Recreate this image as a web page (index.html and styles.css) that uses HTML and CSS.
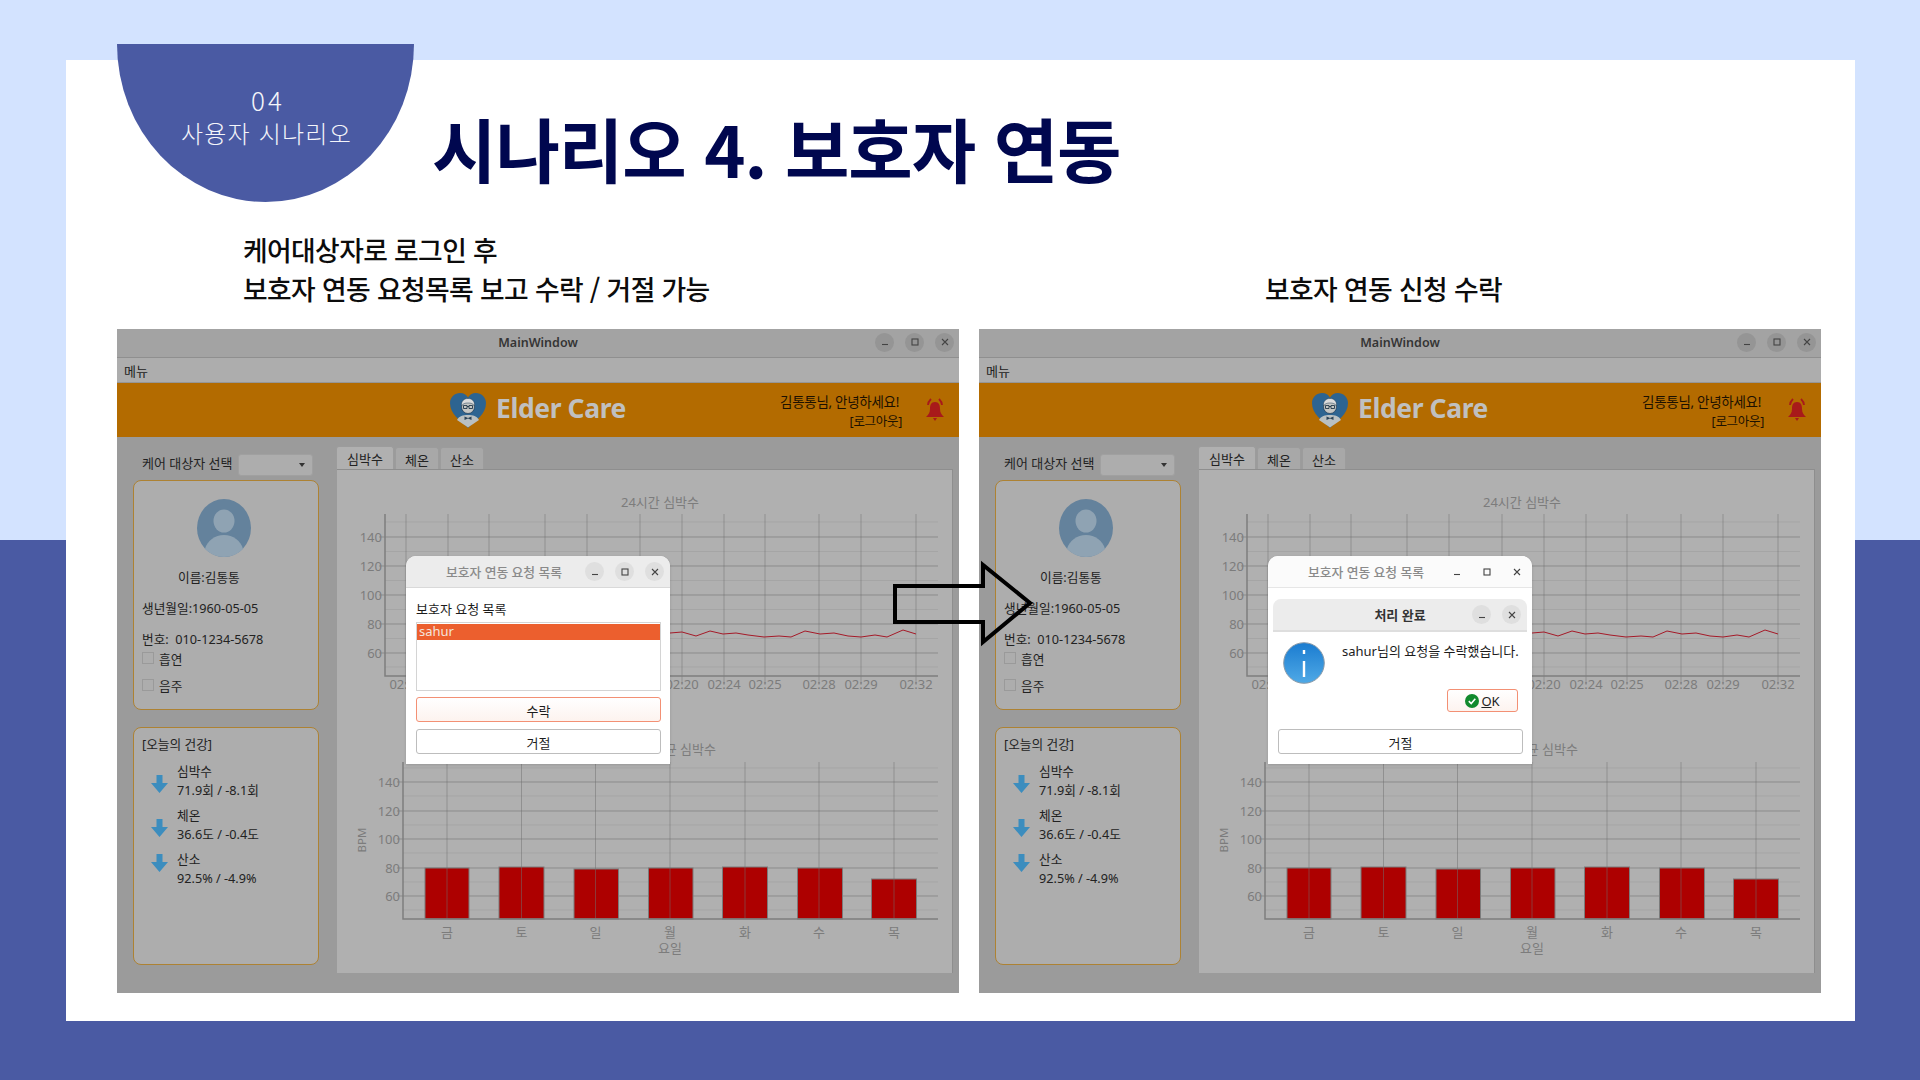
FILE: index.html
```html
<!DOCTYPE html>
<html lang="ko">
<head>
<meta charset="utf-8">
<title>시나리오 4. 보호자 연동</title>
<link rel="stylesheet" href="styles.css">
</head>
<body>
<div class="slide">
  <div class="sheet">
    <header class="head">
      <div class="badge"><span class="badge-num">04</span><span class="badge-text">사용자 시나리오</span></div>
      <h1 class="title">시나리오 4. 보호자 연동</h1>
    </header>
    <div class="stage">
      <div class="captions">
        <p class="cap cap-left">케어대상자로 로그인 후<br>보호자 연동 요청목록 보고 수락 / 거절 가능</p>
        <p class="cap cap-right">보호자 연동 신청 수락</p>
      </div>
      <div class="windows">
        <section class="window">
          <div class="titlebar"><span></span><span class="wt">MainWindow</span>
            <div class="ctrls"><i class="c"><svg class="gl" viewBox="0 0 10 10"><path d="M2 7.5H8"/></svg></i><i class="c"><svg class="gl" viewBox="0 0 10 10"><rect x="2" y="2" width="6" height="6"/></svg></i><i class="c"><svg class="gl" viewBox="0 0 10 10"><path d="M2 2L8 8M8 2L2 8"/></svg></i></div>
          </div>
          <div class="menubar">메뉴</div>
          <div class="brand">
            <span></span>
            <div class="logo">
              <svg class="heart" viewBox="0 0 36 36"><path class="h-bg" d="M18 35C10 27 0 21 0 10C0 4 5 0 10 0C14 0 16.5 2 18 4.5C19.5 2 22 0 26 0C31 0 36 4 36 10C36 21 26 27 18 35Z"/><path class="h-body" d="M7 27C9 23 13 22 18 22C23 22 27 23 29 27C25 30 21 32 18 34.500C15 32 11 30 7 27Z"/><circle class="h-head" cx="18" cy="14" r="6.500"/><path class="h-hair" d="M11.500 13C11 8 14 5.500 18 5.500C22 5.500 25 8 24.500 13C23 10.500 21 10 18 10C15 10 13 10.500 11.500 13Z"/><path class="h-line" d="M13.500 12.500H17V15.500H13.500ZM19 12.500H22.500V15.500H19ZM17 13.500H19"/><path class="h-tie" d="M14.500 23.500L18 25L21.500 23.500V27L18 25.500L14.500 27Z"/></svg>
              <span class="logo-text">Elder Care</span>
            </div>
            <div class="brand-right">
              <div class="greet"><span>김통통님, 안녕하세요!</span><span class="logout">[로그아웃]</span></div>
              <svg class="bell" viewBox="0 0 20 24"><path class="b-fill" d="M10 4C6 4 5 7 5 11C5 15 3 17 1 19H19C17 17 15 15 15 11C15 7 14 4 10 4ZM8 20H12L10 23Z"/><path class="b-arc" d="M3 7C3 5 4 3 6 1M17 7C17 5 16 3 14 1"/></svg>
            </div>
          </div>
          <div class="main">
            <aside class="side">
              <div class="combo-row"><span class="combo-label">케어 대상자 선택</span><div class="combo"><i class="caret"></i></div></div>
              <div class="card card-user">
                <svg class="avatar" viewBox="0 0 54 58"><ellipse class="a-bg" cx="27" cy="29" rx="27" ry="29"/><ellipse class="a-fg" cx="27" cy="22" rx="10.500" ry="11.500"/><path class="a-fg" d="M8 50C10 42 18 36 27 36C36 36 44 42 46 50C41 55 34 58 27 58C20 58 13 55 8 50Z"/></svg>
                <div class="u-name">이름:김통통</div>
                <div class="u-birth">생년월일:1960-05-05</div>
                <div class="u-phone">번호:&nbsp; 010-1234-5678</div>
                <label class="chk chk-a"><i class="box"></i>흡연</label>
                <label class="chk chk-b"><i class="box"></i>음주</label>
              </div>
              <div class="card card-health">
                <div class="h-title">[오늘의 건강]</div>
                <div class="hrow"><svg class="down" viewBox="0 0 17 18"><path d="M5.500 0H11.500V8H17L8.500 18L0 8H5.500Z"/></svg><div>심박수<br>71.9회 / -8.1회</div></div>
                <div class="hrow"><svg class="down" viewBox="0 0 17 18"><path d="M5.500 0H11.500V8H17L8.500 18L0 8H5.500Z"/></svg><div>체온<br>36.6도 / -0.4도</div></div>
                <div class="hrow"><svg class="down down-up" viewBox="0 0 17 18"><path d="M5.500 0H11.500V8H17L8.500 18L0 8H5.500Z"/></svg><div>산소<br>92.5% / -4.9%</div></div>
              </div>
            </aside>
            <div class="tabcol">
              <div class="tabs"><span class="tab on">심박수</span><span class="tab">체온</span><span class="tab">산소</span></div>
              <div class="pane">
                <svg class="chart" viewBox="337 469 615 504">
                  <text class="ct" x="660" y="507">24시간 심박수</text>
                  <path class="minor" d="M385 522H938M385 551.500H938M385 580.500H938M385 609.500H938M385 638.500H938M385 667H938"/>
                  <path class="major" d="M379 537H938M379 566H938M379 595H938M379 624H938M379 653H938"/>
                  <path class="vert" d="M406 514V685M448 514V685M489 514V685M545 514V685M587 514V685M640 514V685M682 514V685M724 514V685M765 514V685M819 514V685M861 514V685M916 514V685"/>
                  <path class="axis" d="M385 514V676H938"/>
                  <g class="ty"><text x="382" y="542">140</text><text x="382" y="571">120</text><text x="382" y="600">100</text><text x="382" y="629">80</text><text x="382" y="658">60</text></g>
                  <g class="tx"><text x="406" y="689">02:00</text><text x="682" y="689">02:20</text><text x="724" y="689">02:24</text><text x="765" y="689">02:25</text><text x="819" y="689">02:28</text><text x="861" y="689">02:29</text><text x="916" y="689">02:32</text></g>
                  <polyline class="line" points="660,634 670,633 682,632 696,636 710,631 723,634 736,633 748,635 764,637 779,636 791,637 805,631 820,634 834,633 848,636 861,637 875,635 887,637 903,630 916,634"/>
                  <text class="ctr" x="716" y="754">주간 평균 심박수</text>
                  <path class="minor" d="M403 768H938M403 796H938M403 825H938M403 853H938M403 882H938M403 910H938"/>
                  <path class="major" d="M397 782H938M397 811H938M397 839H938M397 868H938M397 896H938"/>
                  <g class="bars"><rect x="425" y="868" width="44" height="51"/><rect x="499" y="867" width="45" height="52"/><rect x="574" y="869" width="44.500" height="50"/><rect x="648.500" y="868" width="44.500" height="51"/><rect x="722.500" y="867" width="45" height="52"/><rect x="797.500" y="868" width="45" height="51"/><rect x="871.500" y="879" width="45" height="40"/></g>
                  <path class="vert" d="M447 762V919M521.500 762V919M595.500 762V919M670 762V919M745 762V919M819 762V919M894 762V919"/>
                  <path class="axis" d="M403 762V919H938"/>
                  <g class="ty"><text x="400" y="787">140</text><text x="400" y="816">120</text><text x="400" y="844">100</text><text x="400" y="873">80</text><text x="400" y="901">60</text></g>
                  <text class="bpm" transform="translate(366 840) rotate(-90)">BPM</text>
                  <g class="tx"><text x="447" y="937">금</text><text x="521.500" y="937">토</text><text x="595.500" y="937">일</text><text x="670" y="937">월</text><text x="745" y="937">화</text><text x="819" y="937">수</text><text x="894" y="937">목</text><text x="670" y="953">요일</text></g>
                </svg>
              </div>
            </div>
          </div>
          <div class="dialog">
            <div class="d-title"><span></span><span class="d-name">보호자 연동 요청 목록</span>
              <div class="ctrls dc"><i class="c"><svg class="gl" viewBox="0 0 10 10"><path d="M2 7.5H8"/></svg></i><i class="c"><svg class="gl" viewBox="0 0 10 10"><rect x="2" y="2" width="6" height="6"/></svg></i><i class="c"><svg class="gl" viewBox="0 0 10 10"><path d="M2 2L8 8M8 2L2 8"/></svg></i></div>
            </div>
            <div class="d-body">
              <div class="d-label">보호자 요청 목록</div>
              <div class="list"><div class="list-sel">sahur</div></div>
              <button class="btn btn-on">수락</button>
              <button class="btn">거절</button>
            </div>
          </div>
        </section>

        <section class="window">
          <div class="titlebar"><span></span><span class="wt">MainWindow</span>
            <div class="ctrls"><i class="c"><svg class="gl" viewBox="0 0 10 10"><path d="M2 7.5H8"/></svg></i><i class="c"><svg class="gl" viewBox="0 0 10 10"><rect x="2" y="2" width="6" height="6"/></svg></i><i class="c"><svg class="gl" viewBox="0 0 10 10"><path d="M2 2L8 8M8 2L2 8"/></svg></i></div>
          </div>
          <div class="menubar">메뉴</div>
          <div class="brand">
            <span></span>
            <div class="logo">
              <svg class="heart" viewBox="0 0 36 36"><path class="h-bg" d="M18 35C10 27 0 21 0 10C0 4 5 0 10 0C14 0 16.5 2 18 4.5C19.5 2 22 0 26 0C31 0 36 4 36 10C36 21 26 27 18 35Z"/><path class="h-body" d="M7 27C9 23 13 22 18 22C23 22 27 23 29 27C25 30 21 32 18 34.500C15 32 11 30 7 27Z"/><circle class="h-head" cx="18" cy="14" r="6.500"/><path class="h-hair" d="M11.500 13C11 8 14 5.500 18 5.500C22 5.500 25 8 24.500 13C23 10.500 21 10 18 10C15 10 13 10.500 11.500 13Z"/><path class="h-line" d="M13.500 12.500H17V15.500H13.500ZM19 12.500H22.500V15.500H19ZM17 13.500H19"/><path class="h-tie" d="M14.500 23.500L18 25L21.500 23.500V27L18 25.500L14.500 27Z"/></svg>
              <span class="logo-text">Elder Care</span>
            </div>
            <div class="brand-right">
              <div class="greet"><span>김통통님, 안녕하세요!</span><span class="logout">[로그아웃]</span></div>
              <svg class="bell" viewBox="0 0 20 24"><path class="b-fill" d="M10 4C6 4 5 7 5 11C5 15 3 17 1 19H19C17 17 15 15 15 11C15 7 14 4 10 4ZM8 20H12L10 23Z"/><path class="b-arc" d="M3 7C3 5 4 3 6 1M17 7C17 5 16 3 14 1"/></svg>
            </div>
          </div>
          <div class="main">
            <aside class="side">
              <div class="combo-row"><span class="combo-label">케어 대상자 선택</span><div class="combo"><i class="caret"></i></div></div>
              <div class="card card-user">
                <svg class="avatar" viewBox="0 0 54 58"><ellipse class="a-bg" cx="27" cy="29" rx="27" ry="29"/><ellipse class="a-fg" cx="27" cy="22" rx="10.500" ry="11.500"/><path class="a-fg" d="M8 50C10 42 18 36 27 36C36 36 44 42 46 50C41 55 34 58 27 58C20 58 13 55 8 50Z"/></svg>
                <div class="u-name">이름:김통통</div>
                <div class="u-birth">생년월일:1960-05-05</div>
                <div class="u-phone">번호:&nbsp; 010-1234-5678</div>
                <label class="chk chk-a"><i class="box"></i>흡연</label>
                <label class="chk chk-b"><i class="box"></i>음주</label>
              </div>
              <div class="card card-health">
                <div class="h-title">[오늘의 건강]</div>
                <div class="hrow"><svg class="down" viewBox="0 0 17 18"><path d="M5.500 0H11.500V8H17L8.500 18L0 8H5.500Z"/></svg><div>심박수<br>71.9회 / -8.1회</div></div>
                <div class="hrow"><svg class="down" viewBox="0 0 17 18"><path d="M5.500 0H11.500V8H17L8.500 18L0 8H5.500Z"/></svg><div>체온<br>36.6도 / -0.4도</div></div>
                <div class="hrow"><svg class="down down-up" viewBox="0 0 17 18"><path d="M5.500 0H11.500V8H17L8.500 18L0 8H5.500Z"/></svg><div>산소<br>92.5% / -4.9%</div></div>
              </div>
            </aside>
            <div class="tabcol">
              <div class="tabs"><span class="tab on">심박수</span><span class="tab">체온</span><span class="tab">산소</span></div>
              <div class="pane">
                <svg class="chart" viewBox="337 469 615 504">
                  <text class="ct" x="660" y="507">24시간 심박수</text>
                  <path class="minor" d="M385 522H938M385 551.500H938M385 580.500H938M385 609.500H938M385 638.500H938M385 667H938"/>
                  <path class="major" d="M379 537H938M379 566H938M379 595H938M379 624H938M379 653H938"/>
                  <path class="vert" d="M406 514V685M448 514V685M489 514V685M545 514V685M587 514V685M640 514V685M682 514V685M724 514V685M765 514V685M819 514V685M861 514V685M916 514V685"/>
                  <path class="axis" d="M385 514V676H938"/>
                  <g class="ty"><text x="382" y="542">140</text><text x="382" y="571">120</text><text x="382" y="600">100</text><text x="382" y="629">80</text><text x="382" y="658">60</text></g>
                  <g class="tx"><text x="406" y="689">02:00</text><text x="682" y="689">02:20</text><text x="724" y="689">02:24</text><text x="765" y="689">02:25</text><text x="819" y="689">02:28</text><text x="861" y="689">02:29</text><text x="916" y="689">02:32</text></g>
                  <polyline class="line" points="660,634 670,633 682,632 696,636 710,631 723,634 736,633 748,635 764,637 779,636 791,637 805,631 820,634 834,633 848,636 861,637 875,635 887,637 903,630 916,634"/>
                  <text class="ctr" x="716" y="754">주간 평균 심박수</text>
                  <path class="minor" d="M403 768H938M403 796H938M403 825H938M403 853H938M403 882H938M403 910H938"/>
                  <path class="major" d="M397 782H938M397 811H938M397 839H938M397 868H938M397 896H938"/>
                  <g class="bars"><rect x="425" y="868" width="44" height="51"/><rect x="499" y="867" width="45" height="52"/><rect x="574" y="869" width="44.500" height="50"/><rect x="648.500" y="868" width="44.500" height="51"/><rect x="722.500" y="867" width="45" height="52"/><rect x="797.500" y="868" width="45" height="51"/><rect x="871.500" y="879" width="45" height="40"/></g>
                  <path class="vert" d="M447 762V919M521.500 762V919M595.500 762V919M670 762V919M745 762V919M819 762V919M894 762V919"/>
                  <path class="axis" d="M403 762V919H938"/>
                  <g class="ty"><text x="400" y="787">140</text><text x="400" y="816">120</text><text x="400" y="844">100</text><text x="400" y="873">80</text><text x="400" y="901">60</text></g>
                  <text class="bpm" transform="translate(366 840) rotate(-90)">BPM</text>
                  <g class="tx"><text x="447" y="937">금</text><text x="521.500" y="937">토</text><text x="595.500" y="937">일</text><text x="670" y="937">월</text><text x="745" y="937">화</text><text x="819" y="937">수</text><text x="894" y="937">목</text><text x="670" y="953">요일</text></g>
                </svg>
              </div>
            </div>
          </div>
          <div class="dialog">
            <div class="d-title d-title-off"><span></span><span class="d-name">보호자 연동 요청 목록</span>
              <div class="ctrls dc"><i class="c c-off"><svg class="gl" viewBox="0 0 10 10"><path d="M2 7.5H8"/></svg></i><i class="c c-off"><svg class="gl" viewBox="0 0 10 10"><rect x="2" y="2" width="6" height="6"/></svg></i><i class="c c-off"><svg class="gl" viewBox="0 0 10 10"><path d="M2 2L8 8M8 2L2 8"/></svg></i></div>
            </div>
            <div class="d-body">
              <div class="d-label">보호자 요청 목록</div>
              <div class="list"><div class="list-sel">sahur</div></div>
              <button class="btn btn-on">수락</button>
              <button class="btn">거절</button>
            </div>
            <div class="msg">
              <div class="m-title"><span></span><span class="m-name">처리 완료</span>
                <div class="ctrls mc"><i class="c"><svg class="gl" viewBox="0 0 10 10"><path d="M2 7.5H8"/></svg></i><i class="c"><svg class="gl" viewBox="0 0 10 10"><path d="M2 2L8 8M8 2L2 8"/></svg></i></div>
              </div>
              <div class="m-body">
                <div class="m-row">
                  <svg class="info" viewBox="0 0 42 42"><defs><linearGradient id="ig" x1="0" y1="0" x2="0" y2="1"><stop offset="0" stop-color="#1b7cd0"/><stop offset="1" stop-color="#4fa9e6"/></linearGradient></defs><circle cx="21" cy="21" r="20.300" fill="url(#ig)" class="i-ring"/><path class="i-mark" d="M21 19V35M21 8V12"/></svg>
                  <span class="m-text">sahur님의 요청을 수락했습니다.</span>
                </div>
                <button class="okbtn"><svg class="okic" viewBox="0 0 14 14"><circle class="ok-c" cx="7" cy="7" r="7"/><path class="ok-t" d="M3.800 7.200L6.200 9.500L10.300 4.800"/></svg><span class="oktxt"><u>O</u>K</span></button>
              </div>
            </div>
          </div>
        </section>
        <svg class="arrow" viewBox="0 0 140 82"><path d="M2 23H90V2L137 40L90 79V59H2Z"/></svg>
      </div>
    </div>
  </div>
</div>
</body>
</html>
```

FILE: styles.css
```css
* { box-sizing: border-box; }
html, body { margin: 0; padding: 0; }
body { font-family: "Noto Sans", "Noto Sans CJK KR", sans-serif; }

.slide {
  width: 1920px; height: 1080px; overflow: hidden;
  padding: 60px 65px 59px 66px;
  background: linear-gradient(#d3e3ff 0, #d3e3ff 540px, #4a5aa3 540px, #4a5aa3 100%);
}
.sheet { height: 961px; background: #fff; padding-left: 51px; }

.head { display: flex; height: 142px; }
.badge {
  width: 297px; height: 158px; margin-top: -16px; flex: none;
  background: #4a5aa3; color: #f4f5fa;
  border-radius: 0 0 50% 50% / 0 0 100% 100%;
  display: flex; flex-direction: column; align-items: center; padding-top: 37px;
  font-family: "Noto Sans CJK KR", sans-serif;
}
.badge-num { font-size: 26px; line-height: 37px; letter-spacing: 3px; font-weight: 300; margin-left: 5px; }
.badge-text { font-size: 24px; line-height: 30px; letter-spacing: 1.200px; font-weight: 300; margin-left: 2px; }
.title {
  margin: 38px 0 0 18px; font: 700 70px/100px "Noto Sans CJK KR", sans-serif;
  color: #00074f; letter-spacing: -1px; white-space: nowrap; height: 100px;
}

.stage { width: 1704px; position: relative; }
.captions { display: grid; grid-template-columns: 842px 842px; gap: 20px; height: 127px; align-items: end; padding-bottom: 21px; }
.cap { margin: 0; font: 500 26.800px/39px "Noto Sans CJK KR", sans-serif; color: #0c0c0c; letter-spacing: -.62px; }
.cap-left { padding-left: 126px; }
.cap-right { padding-left: 286px; }

.windows { display: flex; gap: 20px; position: relative; }
.window { width: 842px; height: 664px; background: #9b9b9b; position: relative; display: flex; flex-direction: column; font-size: 13px; color: #222; }

.titlebar { height: 29px; background: #a3a3a3; border-bottom: 1px solid #8f8f8f; display: grid; grid-template-columns: 1fr auto 1fr; align-items: center; flex: none; padding-bottom: 2px; }
.wt { font-weight: 600; font-size: 12.500px; color: #353535; }
.ctrls { display: flex; justify-content: flex-end; gap: 11px; padding-right: 5px; }
.c { width: 19px; height: 19px; border-radius: 50%; background: #959595; display: flex; align-items: center; justify-content: center; }
.c-off { background: transparent; }
.gl { width: 10px; height: 10px; fill: none; stroke: #444; stroke-width: 1.100; }

.menubar { height: 25px; background: #adadad; border-bottom: 1px solid #969696; padding: 0 7px; line-height: 27px; font-size: 13px; flex: none; }

.brand { height: 54px; background: #b36b00; display: grid; grid-template-columns: 1fr auto 1fr; align-items: center; flex: none; }
.logo { display: flex; align-items: center; gap: 10px; }
.heart { width: 36px; height: 36px; margin-top: 1px; }
.h-bg { fill: #2d6491; }
.h-body { fill: #b9c0c2; }
.h-head { fill: #c4c6c4; stroke: #1f3a52; stroke-width: .7; }
.h-hair { fill: #dcdcdc; stroke: #1f3a52; stroke-width: .5; }
.h-line { fill: none; stroke: #22384a; stroke-width: .9; }
.h-tie { fill: #2a4358; }
.logo-text { font: 700 26.500px/1 "Noto Sans", sans-serif; color: #c0c0c0; letter-spacing: -.4px; margin-top: -3px; }
.brand-right { display: flex; justify-content: flex-end; align-items: center; gap: 26px; padding-right: 14px; }
.greet { display: flex; flex-direction: column; align-items: flex-end; line-height: 19px; font-size: 13.500px; color: #1c1100; letter-spacing: -.3px; padding-top: 3px; }
.logout { margin-right: -3px; font-size: 12.500px; }
.bell { width: 20px; height: 24px; }
.b-fill { fill: #a81a1a; }
.b-arc { fill: none; stroke: #a81a1a; stroke-width: 1.800; }

.main { flex: 1; display: flex; padding-left: 16px; }
.side { width: 186px; flex: none; padding-top: 17px; }
.combo-row { display: flex; align-items: center; height: 22px; padding-left: 9px; gap: 6px; }
.combo-label { white-space: nowrap; font-size: 13px; padding-bottom: 5px; }
.combo { width: 75px; height: 22px; border: 1px solid #a0a0a0; border-radius: 3px; background: #adadad; display: flex; align-items: center; justify-content: flex-end; padding-right: 7px; flex: none; }
.caret { width: 0; height: 0; border: 3px solid transparent; border-top: 4px solid #333; border-bottom: 0; }

.card { border: 1px solid #ad8233; border-radius: 8px; background: #adadad; padding: 0 8px; line-height: 18px; font-size: 12.700px; }
.card-user { height: 230px; margin-top: 4px; padding-top: 18px; }
.avatar { display: block; width: 54px; height: 58px; margin: 0 0 0 55px; }
.a-bg { fill: #64829c; }
.a-fg { fill: #8fa3b3; }
.u-name { padding-left: 36px; margin-top: 11px; }
.u-birth { margin-top: 13px; }
.u-phone { margin-top: 13px; }
.chk { display: flex; align-items: center; gap: 5px; }
.chk-a { margin-top: 2px; }
.chk-b { margin-top: 9px; }
.box { width: 12px; height: 12px; border: 1px solid #9a9a9a; background: #adadad; flex: none; margin-top: -2px; }

.card-health { height: 238px; margin-top: 17px; padding-top: 7px; }
.h-title { margin-bottom: 9px; }
.hrow { display: flex; gap: 9px; padding-left: 9px; height: 44px; line-height: 19px; }
.down { width: 17px; height: 18px; margin-top: 13px; flex: none; fill: #3c8dbe; }
.down-up { margin-top: 4px; }

.tabcol { margin-left: 18px; width: 616px; padding-top: 9px; }
.tabs { display: flex; gap: 1px; height: 23px; align-items: flex-end; margin-left: -1px; }
.tab { width: 44px; height: 22px; background: #a8a8a8; border: 1px solid #9c9c9c; border-bottom: 0; border-radius: 3px 3px 0 0; text-align: center; line-height: 24px; font-size: 13px; }
.tab.on { width: 58px; height: 23px; background: #b0b0b0; line-height: 25px; }
.pane { height: 504px; background: #b0b0b0; border-top: 1px solid #8e8e8e; border-right: 1px solid #8e8e8e; overflow: hidden; }
.chart { display: block; width: 615px; height: 504px; margin-top: -1px; font-size: 13px; }
.minor { stroke: #a5a5a5; stroke-width: 1; fill: none; }
.major { stroke: #8b8b8b; stroke-width: 1; fill: none; }
.vert { stroke: rgba(112,112,112,.5); stroke-width: 1; fill: none; }
.axis { stroke: #7e7e7e; stroke-width: 1.500; fill: none; }
.ct { fill: #7c7c7c; text-anchor: middle; }
.ctr { fill: #7c7c7c; text-anchor: end; }
.ty text { fill: #7c7c7c; text-anchor: end; }
.tx text { fill: #7c7c7c; text-anchor: middle; }
.bpm { fill: #7c7c7c; text-anchor: middle; font-size: 11.500px; }
.line { fill: none; stroke: #a51a28; stroke-width: 1; }
.bars rect { fill: #ad0000; stroke: #7b7b7b; stroke-width: 1; }

.dialog { position: absolute; left: 289px; top: 227px; width: 264px; height: 208px; background: #fff; border-radius: 10px 10px 0 0; box-shadow: 0 1px 3px rgba(0,0,0,.15); color: #1c1c1c; font-size: 13px; }
.d-title { height: 32px; background: #ececec; border-bottom: 1px solid #d9d9d9; border-radius: 10px 10px 0 0; display: grid; grid-template-columns: 40px auto 1fr; align-items: center; }
.d-title-off { background: #fbfbfb; border-bottom-color: #e6e6e6; }
.d-name { color: #8a8a8a; font-weight: 500; font-size: 12.800px; white-space: nowrap; }
.dc { padding-right: 6px; gap: 11px; }
.dc .c, .mc .c { background: #dfdfdf; }
.dc .c-off { background: transparent; }
.d-body { padding: 12px 9px 0 10px; display: flex; flex-direction: column; }
.d-label { line-height: 18px; height: 22px; }
.list { height: 69px; border: 1px solid #d4d4d4; padding: 1px 0; background: #fff; }
.list-sel { height: 16px; line-height: 15px; padding-left: 2px; background: #ec5f2e; color: #f4e4dc; }
.btn { height: 25px; margin-top: 6px; border: 1px solid #bdbdbd; border-radius: 3px; background: #fff; font: inherit; color: inherit; padding: 1px 0 0; }
.btn + .btn { margin-top: 7px; }
.btn-on { border-color: #f39074; background: linear-gradient(#fff, #fdf3ef); }

.msg { position: absolute; left: 5px; top: 43px; width: 254px; height: 122.500px; background: #fff; border-radius: 8px 8px 0 0; }
.m-title { height: 33px; background: #ececec; border-bottom: 2px solid #dedede; border-radius: 8px 8px 0 0; display: grid; grid-template-columns: 1fr auto 1fr; align-items: center; }
.m-name { font-weight: 600; color: #333; }
.mc { padding-right: 6px; }
.m-body { display: flex; flex-direction: column; padding: 10px 9px 0 10px; }
.m-row { display: flex; height: 41px; gap: 17px; }
.info { width: 42px; height: 42px; flex: none; }
.i-ring { stroke: #8a9aa8; stroke-width: 1; }
.i-mark { fill: none; stroke: #fff; stroke-width: 2.400; }
.m-text { white-space: nowrap; line-height: 18px; }
.okbtn { align-self: flex-end; margin-top: 6px; width: 71px; height: 23px; border: 1px solid #f39074; border-radius: 3px; background: linear-gradient(#fff, #fdf3ef); display: flex; align-items: center; justify-content: center; gap: 2px; font: inherit; color: #222; padding: 0; }
.okic { width: 14px; height: 14px; }
.ok-c { fill: #128a2e; }
.ok-t { fill: none; stroke: #fff; stroke-width: 1.600; }

.arrow { position: absolute; left: 776px; top: 234px; width: 140px; height: 82px; overflow: visible; }
.arrow path { fill: none; stroke: #000; stroke-width: 4; stroke-linejoin: miter; }
```
